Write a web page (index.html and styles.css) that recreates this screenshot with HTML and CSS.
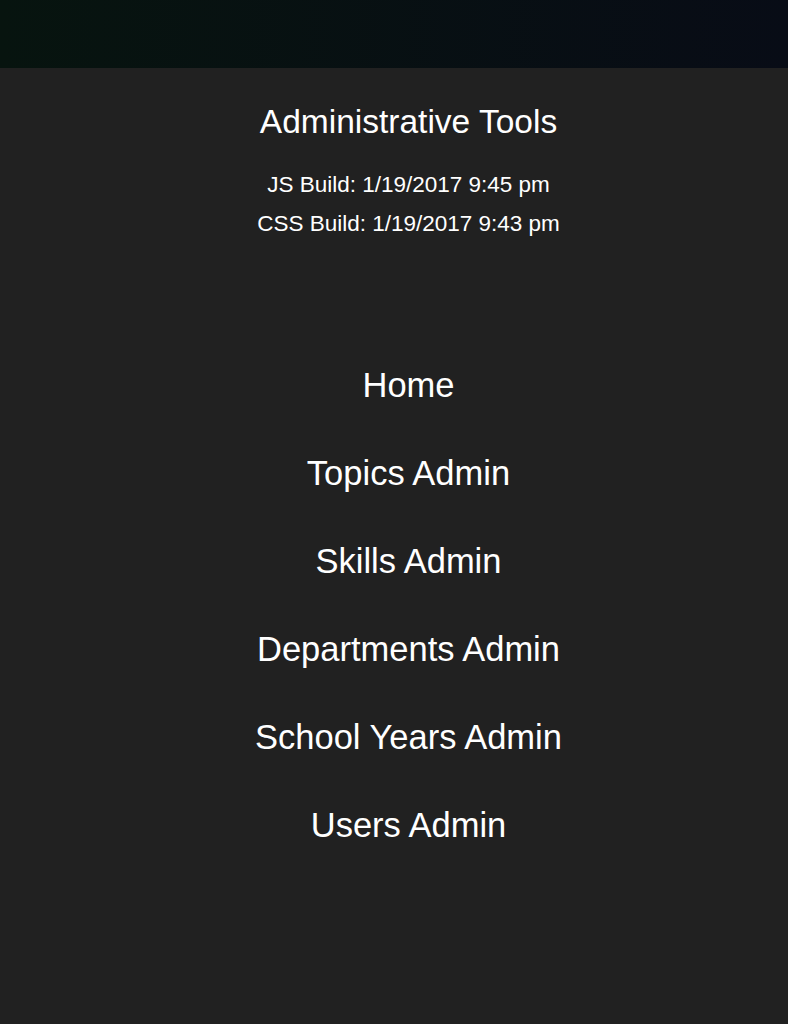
FILE: index.html
```html
<!DOCTYPE html>
<html lang="en">
<head>
    <meta charset="UTF-8">
    <meta name="viewport" content="width=device-width, initial-scale=1.0">
    <title>Administrative Tools</title>
    <link rel="stylesheet" href="styles.css">
</head>
<body>
    <header class="topbar"></header>
    <main class="admin">
        <h1>Administrative Tools</h1>
        <div class="builds">
            <p>JS Build: 1/19/2017 9:45 pm</p>
            <p>CSS Build: 1/19/2017 9:43 pm</p>
        </div>
        <nav class="admin-links">
            <a href="#">Home</a>
            <a href="#">Topics Admin</a>
            <a href="#">Skills Admin</a>
            <a href="#">Departments Admin</a>
            <a href="#">School Years Admin</a>
            <a href="#">Users Admin</a>
        </nav>
    </main>
</body>
</html>
```

FILE: styles.css
```css
html, body { margin: 0; padding: 0; background-color: #212121; }
body { font-family: "Helvetica Neue", "Liberation Sans", Arial, sans-serif; color: #fff; text-align: center; min-height: 1024px; }
.topbar { height: 68px; background: linear-gradient(to right, #07140f, #080c16); }
.admin { padding: 33px 0 0 29px; }
.admin h1 { margin: 0; font-size: 33.5px; font-weight: 300; line-height: 42px; }
.builds { margin-top: 22px; }
.builds p { margin: 0; font-size: 22.5px; font-weight: 300; line-height: 39px; }
.admin-links { display: flex; flex-direction: column; align-items: center; margin-top: 120px; }
.admin-links a { color: #fff; text-decoration: none; font-size: 34.5px; font-weight: 300; line-height: 44px; margin-bottom: 44px; }
```
